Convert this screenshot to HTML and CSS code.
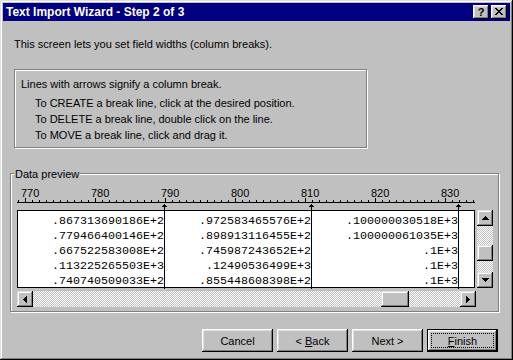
FILE: index.html
```html
<!DOCTYPE html>
<html lang="en">
<head>
    <meta charset="UTF-8">
    <title>Text Import Wizard - Step 2 of 3</title>
    <link rel="stylesheet" href="styles.css">
</head>
<body>
    <div class="window">
        <div class="titlebar">
            <span class="title">Text Import Wizard - Step 2 of 3</span>
            <span class="cap-btn help">?</span>
            <span class="cap-btn close">
                <svg width="8" height="7" viewBox="0 0 8 7"><path d="M0 0h2v1H0z M6 0h2v1H6z M1 1h2v1H1z M5 1h2v1H5z M2 2h4v1H2z M3 3h2v1H3z M2 4h4v1H2z M1 5h2v1H1z M5 5h2v1H5z M0 6h2v1H0z M6 6h2v1H6z" fill="#000"/></svg>
            </span>
        </div>

        <p class="desc">This screen lets you set field widths (column breaks).</p>

        <div class="info">
            <p class="info-head">Lines with arrows signify a column break.</p>
            <p class="info-line">To CREATE a break line, click at the desired position.</p>
            <p class="info-line">To DELETE a break line, double click on the line.</p>
            <p class="info-line">To MOVE a break line, click and drag it.</p>
        </div>

        <div class="group">
            <div class="group-label">Data preview</div>

            <svg class="ruler" width="460" height="26" viewBox="0 0 460 26" shape-rendering="crispEdges">
                <g fill="#000">
                    <rect x="0" y="18" width="458" height="1"/>
                    <rect x="8" y="14" width="1" height="4"/>
                    <rect x="78" y="14" width="1" height="4"/>
                    <rect x="148" y="14" width="1" height="4"/>
                    <rect x="218" y="14" width="1" height="4"/>
                    <rect x="288" y="14" width="1" height="4"/>
                    <rect x="358" y="14" width="1" height="4"/>
                    <rect x="428" y="14" width="1" height="4"/>
                    <path id="minor" d="M1 16h1v2H1z M15 16h1v2h-1z M22 16h1v2h-1z M29 16h1v2h-1z M36 16h1v2h-1z M43 16h1v2h-1z M50 16h1v2h-1z M57 16h1v2h-1z M64 16h1v2h-1z M71 16h1v2h-1z"/>
                    <use href="#minor" x="70"/>
                    <use href="#minor" x="140"/>
                    <use href="#minor" x="210"/>
                    <use href="#minor" x="280"/>
                    <use href="#minor" x="350"/>
                    <path d="M435 16h1v2h-1z M442 16h1v2h-1z M449 16h1v2h-1z M456 16h1v2h-1z"/>
                    <!-- column break arrows -->
                    <path d="M147 20h1v6h-1z M146 21h3v1h-3z M145 22h5v1h-5z"/>
                    <path d="M294 20h1v6h-1z M293 21h3v1h-3z M292 22h5v1h-5z"/>
                    <path d="M441 20h1v6h-1z M440 21h3v1h-3z M439 22h5v1h-5z"/>
                </g>
                <g class="ruler-num">
                    <text x="4" y="13">770</text>
                    <text x="74" y="13">780</text>
                    <text x="144" y="13">790</text>
                    <text x="214" y="13">800</text>
                    <text x="284" y="13">810</text>
                    <text x="354" y="13">820</text>
                    <text x="424" y="13">830</text>
                </g>
            </svg>

            <div class="preview-row">
                <div class="data">
                    <div class="col">
                        <div>.867313690186E+2</div>
                        <div>.779466400146E+2</div>
                        <div>.667522583008E+2</div>
                        <div>.113225265503E+3</div>
                        <div>.740740509033E+2</div>
                    </div>
                    <div class="col">
                        <div>.972583465576E+2</div>
                        <div>.898913116455E+2</div>
                        <div>.745987243652E+2</div>
                        <div>.12490536499E+3</div>
                        <div>.855448608398E+2</div>
                    </div>
                    <div class="col">
                        <div>.100000030518E+3</div>
                        <div>.100000061035E+3</div>
                        <div>.1E+3</div>
                        <div>.1E+3</div>
                        <div>.1E+3</div>
                    </div>
                    <div class="col"></div>
                </div>

                <div class="vscroll">
                    <span class="sb-btn">
                        <svg width="7" height="4" viewBox="0 0 7 4"><path d="M3 0h1v1H3z M2 1h3v1H2z M1 2h5v1H1z M0 3h7v1H0z" fill="#000"/></svg>
                    </span>
                    <div class="track vtrack"><span class="thumb"></span></div>
                    <span class="sb-btn">
                        <svg width="7" height="4" viewBox="0 0 7 4"><path d="M0 0h7v1H0z M1 1h5v1H1z M2 2h3v1H2z M3 3h1v1H3z" fill="#000"/></svg>
                    </span>
                </div>
            </div>

            <div class="hscroll">
                <span class="sb-btn">
                    <svg width="4" height="7" viewBox="0 0 4 7"><path d="M0 3h1v1H0z M1 2h1v3H1z M2 1h1v5H2z M3 0h1v7H3z" fill="#000"/></svg>
                </span>
                <div class="track htrack"><span class="thumb"></span></div>
                <span class="sb-btn">
                    <svg width="4" height="7" viewBox="0 0 4 7"><path d="M0 0h1v7H0z M1 1h1v5H1z M2 2h1v3H2z M3 3h1v1H3z" fill="#000"/></svg>
                </span>
            </div>
        </div>

        <div class="buttons">
            <button class="btn">Cancel</button>
            <button class="btn">&lt; <u>B</u>ack</button>
            <button class="btn">Next &gt;</button>
            <button class="btn default"><span class="focus"><u>F</u>inish</span></button>
        </div>
    </div>
</body>
</html>
```

FILE: styles.css
```css
body {
    margin: 0;
    background: #c0c0c0;
    font-family: "Liberation Sans", Arial, sans-serif;
    font-size: 11px;
    color: #000;
}
p {
    margin: 0;
}
.window {
    width: 513px;
    height: 360px;
    box-sizing: border-box;
    padding: 3px;
    background: #c0c0c0;
    box-shadow: inset -1px -1px #000, inset 1px 1px #dfdfdf, inset -2px -2px #808080, inset 2px 2px #fff;
}
.titlebar {
    height: 18px;
    display: flex;
    align-items: center;
    background: #000080;
    color: #fff;
    padding-left: 3px;
}
.title {
    flex: 1;
    font-weight: bold;
    font-size: 12px;
}
.cap-btn {
    width: 16px;
    height: 14px;
    box-sizing: border-box;
    display: flex;
    align-items: center;
    justify-content: center;
    background: #c0c0c0;
    color: #000;
    box-shadow: inset -1px -1px #000, inset 1px 1px #fff, inset -2px -2px #808080, inset 2px 2px #dfdfdf;
}
.help {
    margin-right: 2px;
    font-weight: bold;
    font-size: 11px;
}
.close {
    margin-right: 3px;
}
.close svg {
    display: block;
    margin-top: -1px;
}
.desc {
    margin: 17px 0 0 11px;
    line-height: 13px;
}
.info {
    margin: 18px 0 0 11px;
    width: 353px;
    height: 79px;
    box-sizing: border-box;
    border: 1px solid #808080;
    box-shadow: 1px 1px 0 #fff, inset 1px 1px 0 #fff;
    padding: 6px 0 0 6px;
    line-height: 16px;
}
.info-head {
    margin-bottom: 3px;
}
.info-line {
    padding-left: 14px;
}
.group {
    margin: 25px 0 0 7px;
    width: 489px;
    height: 139px;
    box-sizing: border-box;
    border: 1px solid #808080;
    box-shadow: 1px 1px 0 #fff, inset 1px 1px 0 #fff;
}
.group-label {
    display: table;
    margin: -6px 0 0 3px;
    padding: 0 1px;
    background: #c0c0c0;
    line-height: 13px;
}
.ruler {
    display: block;
    margin: 3px 0 0 6px;
}
.ruler-num {
    font-family: "Liberation Sans", Arial, sans-serif;
    font-size: 11px;
    fill: #000;
}
.preview-row {
    display: flex;
    gap: 2px;
    margin-left: 6px;
}
.data {
    width: 458px;
    height: 78px;
    box-sizing: border-box;
    border: 1px solid #000;
    background: #fff;
    display: grid;
    grid-template-columns: 147px 147px 147px 1fr;
}
.col {
    border-right: 1px solid #000;
    padding-top: 3px;
    text-align: right;
    font-family: "Liberation Mono", "Courier New", monospace;
    font-size: 11.67px;
    line-height: 15px;
    white-space: nowrap;
}
.col:last-child {
    border-right: none;
}
.vscroll {
    width: 16px;
    height: 78px;
    display: flex;
    flex-direction: column;
}
.hscroll {
    width: 459px;
    height: 16px;
    margin: 3px 0 0 6px;
    display: flex;
}
.sb-btn {
    width: 16px;
    height: 16px;
    flex: none;
    box-sizing: border-box;
    display: flex;
    align-items: center;
    justify-content: center;
    background: #c0c0c0;
    box-shadow: inset -1px -1px #000, inset 1px 1px #dfdfdf, inset -2px -2px #808080, inset 2px 2px #fff;
}
.sb-btn svg {
    display: block;
}
.track {
    flex: 1;
    display: flex;
    background: repeating-conic-gradient(#c0c0c0 0 25%, #fff 0 50%) 0 0 / 2px 2px;
}
.thumb {
    display: block;
    background: #c0c0c0;
    box-shadow: inset -1px -1px #000, inset 1px 1px #dfdfdf, inset -2px -2px #808080, inset 2px 2px #fff;
}
.vtrack {
    flex-direction: column;
}
.vtrack .thumb {
    width: 16px;
    height: 16px;
    margin-top: 19px;
}
.htrack .thumb {
    width: 28px;
    height: 16px;
    margin-left: 348px;
}
.buttons {
    margin-top: 17px;
    padding-right: 12px;
    display: flex;
    justify-content: flex-end;
    gap: 4px;
}
.btn {
    width: 71px;
    height: 23px;
    padding: 0;
    border: none;
    background: #c0c0c0;
    font-family: "Liberation Sans", Arial, sans-serif;
    font-size: 11px;
    color: #000;
    box-shadow: inset -1px -1px #000, inset 1px 1px #fff, inset -2px -2px #808080, inset 2px 2px #dfdfdf;
}
.btn.default {
    box-shadow: inset 0 0 0 1px #000, inset -2px -2px #000, inset 2px 2px #fff, inset -3px -3px #808080, inset 3px 3px #dfdfdf;
    display: flex;
    padding: 4px;
}
.focus {
    flex: 1;
    display: flex;
    align-items: center;
    justify-content: center;
    border: 1px dotted #000;
}
```
